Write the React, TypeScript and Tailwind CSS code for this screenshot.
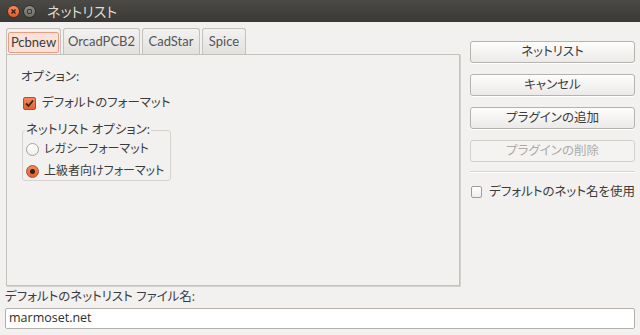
import React from "react";

const font = "[font-family:'Open_Sans','Noto_Sans_CJK_JP',sans-serif] [font-feature-settings:'palt']";

function Btn({ label, disabled }: { label: string; disabled?: boolean }) {
  return (
    <div
      className={
        "h-[22px] w-full rounded-[3px] border flex items-center justify-center whitespace-nowrap " +
        (disabled
          ? "border-[#d3d0cc] bg-[#f4f3f2] text-[#aeaba7]"
          : "border-[#b6b3ae] bg-gradient-to-b from-[#fdfdfc] to-[#eceae8] text-[#3c3c3c] shadow-[0_1px_0_#ffffff]")
      }
    >
      {label}
    </div>
  );
}

function Tab({ label, active, w }: { label: string; active?: boolean; w: string }) {
  return (
    <div
      className={
        w +
        " h-[26px] shrink-0 rounded-t-[3px] border border-b-0 border-[#c4c1bd] flex items-center justify-center text-[13px] whitespace-nowrap [font-family:'Lato',sans-serif] " +
        (active ? "bg-[#f2f1f0] px-[1px]" : "bg-gradient-to-b from-[#f3f2f1] to-[#e3e1de]")
      }
    >
      {active ? (
        <div className="h-[21px] mt-[2px] w-full border border-[#ec9b80] bg-[#fbe2d8] rounded-[2px] flex items-center justify-center text-[#3c3c3c]">
          {label}
        </div>
      ) : (
        <div className="text-[#555555]">{label}</div>
      )}
    </div>
  );
}

export default function App() {
  return (
    <div className={"w-[640px] h-[335px] bg-[#f2f1f0] text-[12.5px] text-[#3c3c3c] flex flex-col overflow-hidden " + font}>
      {/* title bar */}
      <div className="h-[22px] shrink-0 bg-gradient-to-b from-[#4a4945] to-[#3a3935] flex items-center pl-[7px]">
        <div className="w-[13px] h-[13px] rounded-full bg-gradient-to-b from-[#f48a5e] to-[#e05a2a] border border-[#5a2a18] flex items-center justify-center">
          <svg width="7" height="7" viewBox="0 0 7 7">
            <path d="M1.5 1.5 L5.5 5.5 M5.5 1.5 L1.5 5.5" stroke="#3a1a10" strokeWidth="1.3" />
          </svg>
        </div>
        <div className="ml-[3px] w-[13px] h-[13px] rounded-full bg-gradient-to-b from-[#8c8b86] to-[#6f6e69] border border-[#2e2d2a] flex items-center justify-center">
          <div className="w-[5px] h-[5px] border border-[#3a3935] rounded-[1px]" />
        </div>
        <div className="ml-[11px] text-[14px] text-[#dfdbd2]">ネットリスト</div>
      </div>

      {/* main */}
      <div className="flex flex-1 pt-[6px] pl-[6px] pr-[5px]">
        {/* notebook */}
        <div className="w-[454px] shrink-0 flex flex-col">
          <div className="flex gap-[2px] items-end">
            <Tab label="Pcbnew" active w="w-[55px]" />
            <Tab label="OrcadPCB2" w="w-[77px]" />
            <Tab label="CadStar" w="w-[58px]" />
            <Tab label="Spice" w="w-[44px]" />
          </div>
          <div className="h-[232px] border border-[#c4c1bd] shadow-[1px_1px_0_#d6d3cf] bg-[#f2f1f0] pl-[14px] pt-[14px]">
            <div className="leading-[16px]">オプション:</div>
            <div className="flex items-center mt-[10px] h-[16px]">
              <div className="w-[13px] h-[13px] ml-[2px] rounded-[2px] border border-[#a8532f] bg-gradient-to-b from-[#f4875a] to-[#e2622f] flex items-center justify-center">
                <svg width="11" height="11" viewBox="0 0 11 11">
                  <path d="M2 5.5 L4.5 8 L9 2.5" fill="none" stroke="#3b2116" strokeWidth="1.8" />
                </svg>
              </div>
              <div className="ml-[6px] whitespace-nowrap">デフォルトのフォーマット</div>
            </div>
            {/* group */}
            <div className="relative mt-[19px] ml-[1px] w-[149px] h-[51px] border border-[#d6d3cf] rounded-[3px] pl-[3px] pt-[7px] whitespace-nowrap">
              <div className="absolute left-[2px] -top-[9px] bg-[#f2f1f0] px-[1px] leading-[16px]">ネットリスト オプション:</div>
              <div className="flex items-center h-[22px]">
                <div className="w-[13px] h-[13px] rounded-full border border-[#a5a29e] bg-gradient-to-b from-[#ffffff] to-[#efeeec]" />
                <div className="ml-[5px] text-[12px]">レガシーフォーマット</div>
              </div>
              <div className="flex items-center h-[22px]">
                <div className="w-[13px] h-[13px] rounded-full border border-[#a8532f] bg-gradient-to-b from-[#f4875a] to-[#e2622f] flex items-center justify-center">
                  <div className="w-[5px] h-[5px] rounded-full bg-[#3b2116]" />
                </div>
                <div className="ml-[5px] text-[12px]">上級者向けフォーマット</div>
              </div>
            </div>
          </div>
        </div>

        {/* right column */}
        <div className="ml-[10px] flex-1 min-w-0 flex flex-col pt-[13px]">
          <div className="flex flex-col gap-[11px]">
            <Btn label="ネットリスト" />
            <Btn label="キャンセル" />
            <Btn label="プラグインの追加" />
            <Btn label="プラグインの削除" disabled />
          </div>
          <div className="mt-[9px] border-t border-[#d6d3cf] border-b border-b-[#ffffff]" />
          <div className="flex items-center mt-[11px] h-[16px] whitespace-nowrap">
            <div className="w-[12px] h-[12px] ml-[1px] rounded-[2px] border border-[#9f9c98] bg-gradient-to-b from-[#ffffff] to-[#efeeec]" />
            <div className="ml-[7px]">デフォルトのネット名を使用</div>
          </div>
        </div>
      </div>

      {/* bottom */}
      <div className="px-[5px] pb-[6px]">
        <div className="leading-[16px] mb-[3px]">デフォルトのネットリスト ファイル名:</div>
        <div className="h-[21px] w-[630px] bg-white border border-[#b3b0ac] rounded-[2px] flex items-center pl-[3px] text-[#2e2e2e]">
          marmoset.net
        </div>
      </div>
    </div>
  );
}
